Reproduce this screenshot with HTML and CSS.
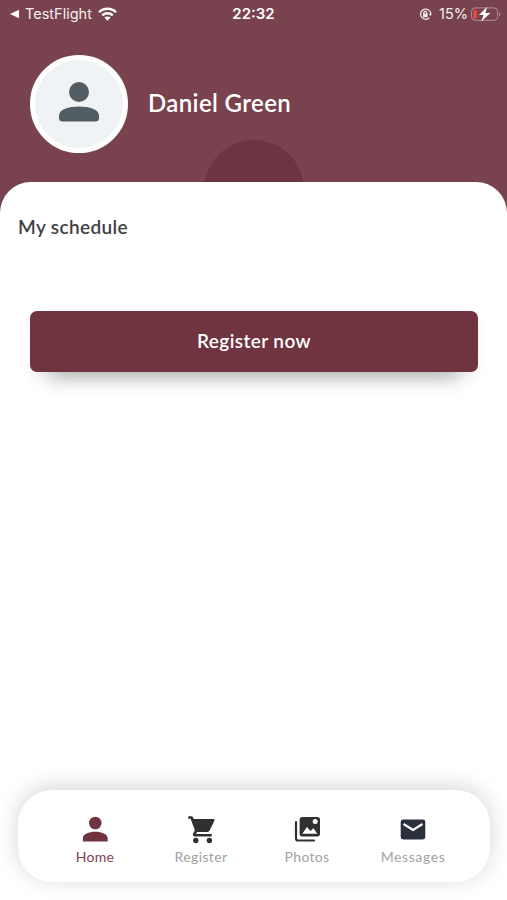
FILE: index.html
```html
<!DOCTYPE html>
<html lang="en">
<head>
<meta charset="utf-8">
<title>Home</title>
<link rel="stylesheet" href="styles.css">
</head>
<body>
<div class="app">
  <header class="header">
    <div class="status">
      <div class="status-left">
        <svg class="back" width="10" height="10" viewBox="0 0 10 10"><path d="M0 5 9 .8v8.4z" fill="#fff"/></svg>
        <span class="carrier">TestFlight</span>
        <svg class="wifi" width="19" height="14" viewBox="0 0 19 14"><g fill="none" stroke="#fff" stroke-width="2.3"><path d="M1 5.2C5.7.6 13.3.6 18 5.2"/><path d="M4.2 8.4c3-2.9 7.6-2.9 10.6 0"/></g><path d="M6.4 10.6c1.8-1.6 4.4-1.6 6.2 0L9.5 13.8z" fill="#fff"/></svg>
      </div>
      <span class="clock">22:32</span>
      <div class="status-right">
        <svg class="lock" width="13" height="13" viewBox="0 0 13 13"><g fill="none" stroke="#f3e8ea" stroke-width="1.3"><path d="M10.7 3A5.1 5.1 0 1 0 10.3 9.8"/><path d="M11 3.2q.7 1.3.7 3"/><path d="M4.9 6V4.8a1.4 1.4 0 0 1 2.8 0V6"/></g><path d="M4 5.7h4.6v3.5H4zM9.8 5.8h3.2l-1.6 2.3z" fill="#f3e8ea"/></svg>
        <span class="percent">15%</span>
        <svg class="battery" width="30" height="16" viewBox="0 0 30 16"><rect x=".6" y="1.9" width="26" height="12.4" rx="3.4" fill="none" stroke="#b18e96"/><path d="M28 6v4.4c1.7-.7 1.7-3.7 0-4.4z" fill="#b18e96"/><rect x="2.4" y="3.8" width="3.4" height="8.6" rx="1" fill="#f0473c"/><path d="M16.2.8 8 9h4.600l-2.400 6.500L19.500 7h-5.100z" fill="#fff"/></svg>
      </div>
    </div>
    <div class="profile">
      <div class="avatar">
        <svg width="40" height="40" viewBox="0 0 40 40" fill="#525d63"><circle cx="20" cy="10" r="10"/><path d="M0 36v-2.500C0 27.500 9.500 24.500 20 24.500s20 3 20 9V36q0 3.500-3.500 3.500h-33Q0 39.500 0 36z"/></svg>
      </div>
      <h1 class="name">Daniel Green</h1>
    </div>
    <div class="bubble"></div>
  </header>
  <main class="sheet">
    <h2 class="title">My schedule</h2>
    <button class="register" type="button"><span>Register now</span></button>
  </main>
  <nav class="tabs">
    <a class="tab active">
      <svg width="32" height="32" viewBox="0 0 24 24"><circle cx="12.2" cy="7.5" r="4.700"/><path d="M2.900 21.300v-2.400c0-3.100 4.500-4.800 9.300-4.800s9.300 1.700 9.300 4.800v2.400z"/></svg>
      <span>Home</span>
    </a>
    <a class="tab">
      <svg width="32" height="32" viewBox="0 0 32 32"><path d="M3.300 3.200h4l1.500 2.900h19.700q1.700 0 1 1.500l-4.900 10q-.7 1.400-2.200 1.400H12.200L11 20.900h15.700v2.500H10.200q-3 0-2.200-2.600l1.900-3.600L5.600 5.700H3.300z"/><circle cx="10.800" cy="27.500" r="2.700"/><circle cx="24.400" cy="27.500" r="2.700"/></svg>
      <span class="wide">Register</span>
    </a>
    <a class="tab">
      <svg width="32" height="32" viewBox="0 0 32 32"><path d="M5 9v16.500q0 2 2 2H23" fill="none" stroke="#303033" stroke-width="2.200" stroke-linecap="round"/><path fill-rule="evenodd" d="M11.300 4h15q2.700 0 2.700 2.700v14q0 2.700-2.700 2.700h-15q-2.700 0-2.700-2.700v-14Q8.600 4 11.300 4zm12.900 2a2.500 2.500 0 1 0 0 5 2.500 2.500 0 0 0 0-5zM11.300 20.800h15l-3.800-5.600-3 2.800-3.500-4z"/></svg>
      <span>Photos</span>
    </a>
    <a class="tab mail">
      <svg width="32" height="32" viewBox="0 0 32 32"><rect x="3.700" y="6.500" width="24.600" height="20" rx="2.400"/><path d="m6.500 11 9.500 6 9.500-6" fill="none" stroke="#fff" stroke-width="2.200"/></svg>
      <span class="wide messages">Messages</span>
    </a>
  </nav>
</div>
</body>
</html>
```
FILE: styles.css
```css
* { box-sizing: border-box; }
body { margin: 0; font-family: Lato, "Liberation Sans", sans-serif; background: #fff; }
.app { height: 900px; display: flex; flex-direction: column; overflow: hidden; }
.header { position: relative; flex: none; height: 212px; background: #78424e; overflow: hidden; }
.status { display: grid; grid-template-columns: 1fr auto 1fr; align-items: center; height: 28px; padding: 0 6px; color: #f6edef; font: 15px/20px Inter, sans-serif; }
.status-left, .status-right { display: flex; align-items: center; }
.status-left { padding-left: 4px; }
.status-right { justify-content: flex-end; }
.back { margin-right: 5px; }
.carrier { width: 68px; font-size: 14.5px; white-space: nowrap; }
.wifi { margin-left: 5px; }
.clock { font-weight: 600; color: #fff; }
.percent { margin: 0 3px 0 7px; font-size: 14.5px; }
.profile { display: flex; align-items: center; gap: 20px; margin: 26.5px 0 0 30px; }
.avatar { display: flex; align-items: center; justify-content: center; width: 98px; height: 98px; border: 5px solid #fff; border-radius: 50%; background: #f0f3f6; padding-bottom: 4px; }
.name { margin: 0 0 2px; color: #fff; font-size: 24px; line-height: 30px; font-weight: 600; letter-spacing: .37px; }
.bubble { position: absolute; left: 204px; top: 140px; width: 100px; height: 100px; border-radius: 50%; background: #6c3541; }
.sheet { position: relative; flex: 1; margin-top: -30px; padding: 31px 29px 0 30px; border-radius: 31px 31px 0 0; background: #fff; }
.title { margin: 0 0 0 -12px; color: #414144; font-size: 19px; line-height: 28px; font-weight: 600; letter-spacing: .36px; }
.register { display: block; width: 100%; height: 61px; margin: 70px 0 0; padding: 0 0 1px; border: 0; border-radius: 7px; background: #703340; box-shadow: 0 24px 20px -19px rgba(55, 55, 45, .38), 0 5px 18px -4px rgba(60, 60, 50, .09); color: #fff; font: 600 19px/28px Lato, sans-serif; letter-spacing: .4px; }
.tabs { position: relative; flex: none; display: grid; grid-template-columns: repeat(4, 106px); justify-content: center; height: 92px; margin: 0 17px 18px 18px; padding-top: 23px; border-radius: 34px; background: #fff; box-shadow: 0 -3px 22px rgba(0, 0, 0, .17); }
.tab { display: flex; flex-direction: column; align-items: center; color: #a2a2a4; font-size: 14px; line-height: 20px; letter-spacing: .3px; fill: #303033; }
.tab span { margin-top: 2px; }
.tab .wide { letter-spacing: .4px; }
.tab .messages { letter-spacing: .6px; }
.active { color: #80404e; fill: #703340; }
.mail { fill: #2b303c; }
```
